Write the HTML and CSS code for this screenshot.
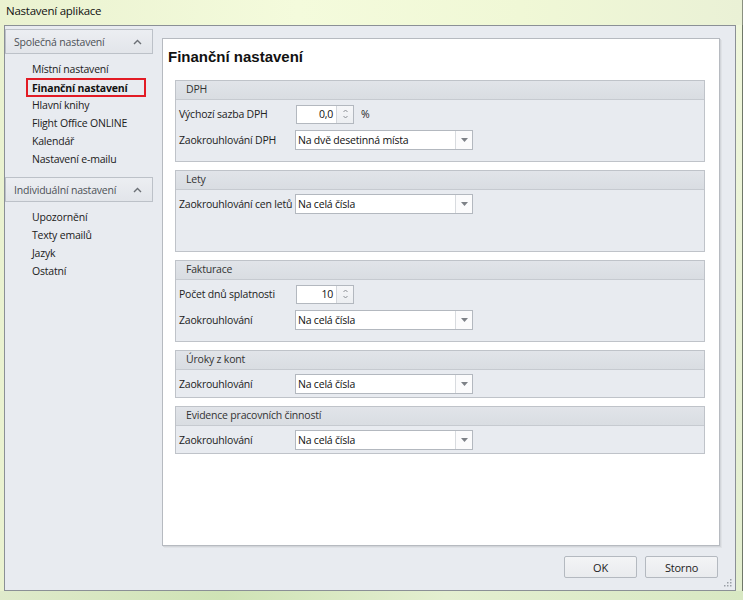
FILE: index.html
```html
<!DOCTYPE html>
<html lang="cs">
<head>
<meta charset="utf-8">
<title>Nastavení aplikace</title>
<link rel="stylesheet" href="styles.css">
</head>
<body>
<div class="window">
  <div class="titlebar"><span class="title">Nastavení aplikace</span></div>
  <div class="frame">
    <div class="glass-side left"></div>
    <div class="client">
      <div class="content">
        <nav class="nav">
          <div class="nav-group">
            <div class="nav-head"><span>Společná nastavení</span><span class="chev"><svg width="9" height="6" viewBox="0 0 9 6"><path d="M1 5 L4.5 1.5 L8 5" fill="none" stroke="#6b6f75" stroke-width="1.4"/></svg></span></div>
            <ul class="nav-items">
              <li>Místní nastavení</li>
              <li class="active"><span>Finanční nastavení</span></li>
              <li>Hlavní knihy</li>
              <li>Flight Office ONLINE</li>
              <li>Kalendář</li>
              <li>Nastavení e-mailu</li>
            </ul>
          </div>
          <div class="nav-group">
            <div class="nav-head"><span>Individuální nastavení</span><span class="chev"><svg width="9" height="6" viewBox="0 0 9 6"><path d="M1 5 L4.5 1.5 L8 5" fill="none" stroke="#6b6f75" stroke-width="1.4"/></svg></span></div>
            <ul class="nav-items">
              <li>Upozornění</li>
              <li>Texty emailů</li>
              <li>Jazyk</li>
              <li>Ostatní</li>
            </ul>
          </div>
        </nav>
        <main class="panel">
          <h1 class="panel-title">Finanční nastavení</h1>
          <section class="group tall">
            <div class="group-head">DPH</div>
            <div class="group-body">
              <div class="row">
                <span class="lbl">Výchozí sazba DPH</span>
                <div class="spin"><span class="spin-val">0,0</span><span class="spin-btn"><svg width="5" height="12" viewBox="0 0 5 12"><path d="M0.5 4 L2.5 2 L4.5 4 M0.5 8 L2.5 10 L4.5 8" fill="none" stroke="#8a8e94" stroke-width="1"/></svg></span></div>
                <span class="unit">%</span>
              </div>
              <div class="row">
                <span class="lbl">Zaokrouhlování DPH</span>
                <div class="combo"><span class="combo-val">Na dvě desetinná místa</span><span class="combo-btn"><svg width="7" height="4" viewBox="0 0 7 4"><path d="M0 0 H7 L3.5 4Z" fill="#7d8187"/></svg></span></div>
              </div>
            </div>
          </section>
          <section class="group tall">
            <div class="group-head">Lety</div>
            <div class="group-body">
              <div class="row">
                <span class="lbl">Zaokrouhlování cen letů</span>
                <div class="combo"><span class="combo-val">Na celá čísla</span><span class="combo-btn"><svg width="7" height="4" viewBox="0 0 7 4"><path d="M0 0 H7 L3.5 4Z" fill="#7d8187"/></svg></span></div>
              </div>
            </div>
          </section>
          <section class="group tall">
            <div class="group-head">Fakturace</div>
            <div class="group-body">
              <div class="row">
                <span class="lbl">Počet dnů splatnosti</span>
                <div class="spin"><span class="spin-val">10</span><span class="spin-btn"><svg width="5" height="12" viewBox="0 0 5 12"><path d="M0.5 4 L2.5 2 L4.5 4 M0.5 8 L2.5 10 L4.5 8" fill="none" stroke="#8a8e94" stroke-width="1"/></svg></span></div>
              </div>
              <div class="row">
                <span class="lbl">Zaokrouhlování</span>
                <div class="combo"><span class="combo-val">Na celá čísla</span><span class="combo-btn"><svg width="7" height="4" viewBox="0 0 7 4"><path d="M0 0 H7 L3.5 4Z" fill="#7d8187"/></svg></span></div>
              </div>
            </div>
          </section>
          <section class="group">
            <div class="group-head">Úroky z kont</div>
            <div class="group-body">
              <div class="row">
                <span class="lbl">Zaokrouhlování</span>
                <div class="combo"><span class="combo-val">Na celá čísla</span><span class="combo-btn"><svg width="7" height="4" viewBox="0 0 7 4"><path d="M0 0 H7 L3.5 4Z" fill="#7d8187"/></svg></span></div>
              </div>
            </div>
          </section>
          <section class="group">
            <div class="group-head">Evidence pracovních činností</div>
            <div class="group-body">
              <div class="row">
                <span class="lbl">Zaokrouhlování</span>
                <div class="combo"><span class="combo-val">Na celá čísla</span><span class="combo-btn"><svg width="7" height="4" viewBox="0 0 7 4"><path d="M0 0 H7 L3.5 4Z" fill="#7d8187"/></svg></span></div>
              </div>
            </div>
          </section>
        </main>
      </div>
      <footer class="footer">
        <button class="btn">OK</button>
        <button class="btn">Storno</button>
        <span class="grip"><svg width="8" height="8" viewBox="0 0 8 8"><g fill="#9aa0a6"><rect x="6" y="0" width="1.5" height="1.5"/><rect x="3" y="3" width="1.5" height="1.5"/><rect x="6" y="3" width="1.5" height="1.5"/><rect x="0" y="6" width="1.5" height="1.5"/><rect x="3" y="6" width="1.5" height="1.5"/><rect x="6" y="6" width="1.5" height="1.5"/></g></svg></span>
      </footer>
    </div>
    <div class="glass-side right"></div>
  </div>
  <div class="glass-bottom"></div>
</div>
</body>
</html>
```
FILE: styles.css
```css
* { box-sizing: border-box; }
html, body { margin: 0; padding: 0; }
body {
  width: 743px;
  height: 600px;
  overflow: hidden;
  font-family: "Open Sans", "Liberation Sans", sans-serif;
  font-size: 10.5px;
  letter-spacing: -0.2px;
  color: #1e1e1e;
  background: #eef5d8;
}
.window {
  width: 743px;
  height: 600px;
  display: flex;
  flex-direction: column;
  background: linear-gradient(90deg, #eaf2d0 0%, #f4fbdc 40%, #f0f8d6 70%, #eaf1d6 100%);
}
.titlebar {
  height: 25px;
  flex: none;
  display: flex;
  align-items: center;
  padding-left: 6px;
  border-right: 1px solid #8a9080;
}
.title {
  font-size: 11.5px;
  letter-spacing: -0.25px;
  color: #111;
  position: relative;
  top: -2px;
}
.frame {
  flex: 1;
  display: flex;
  min-height: 0;
}
.glass-side.left { width: 4px; flex: none; }
.glass-side.right {
  width: 7px;
  flex: none;
  border-right: 1px solid #6f7768;
  background: linear-gradient(180deg, #f0f7dc, #e3eed0);
}
.glass-bottom {
  height: 9px;
  flex: none;
  background: linear-gradient(90deg, #dfeacb, #cfe3b5 30%, #e4efd0 60%, #d8e8c3 100%);
}
.client {
  flex: 1;
  display: flex;
  flex-direction: column;
  background: #e8ebf0;
  border: 1px solid #8b9096;
  min-width: 0;
}
.content {
  flex: 1;
  display: flex;
  min-height: 0;
}
.nav {
  width: 148px;
  flex: none;
  padding-top: 3px;
  display: flex;
  flex-direction: column;
}
.nav-head {
  height: 25px;
  display: flex;
  align-items: center;
  justify-content: space-between;
  padding: 0 8px 0 8px;
  border: 1px solid #bcc1c8;
  background: linear-gradient(180deg, #eceef2 0%, #e2e5ea 100%);
  color: #4d5157;
}
.nav-head .chev { display: flex; align-items: center; padding-right: 2px; }
.nav-items {
  list-style: none;
  margin: 0;
  padding: 6px 0 0 21px;
  height: 123px;
}
.nav-group + .nav-group .nav-items { height: auto; }
.nav-items li {
  height: 18px;
  line-height: 18px;
  color: #202020;
}
.nav-items li:not(.active) { padding-left: 6px; }
.nav-items li.active span {
  display: inline-block;
  width: 120px;
  height: 19px;
  line-height: 16px;
  padding-left: 4px;
  border: 2px solid #e21b25;
  font-weight: 700;
  color: #111;
}
.panel {
  flex: 1;
  margin: 12px 15px 0 9px;
  background: #fff;
  border: 1px solid #b6bac0;
  box-shadow: 1px 1px 0 #d2d5da, 2px 2px 0 #dfe2e6;
  padding: 0 14px 0 12px;
  min-width: 0;
}
.panel-title {
  margin: 8px 0 0 -7px;
  height: 33px;
  font-family: "Liberation Sans", Arial, sans-serif;
  font-size: 15px;
  letter-spacing: 0;
  font-weight: 700;
  color: #111;
  line-height: 20px;
}
.group {
  border: 1px solid #bfc3c9;
  background: #e8ebf0;
  margin-bottom: 8px;
  padding-bottom: 3px;
}
.group.tall { height: 82px; }
.group-head {
  height: 19px;
  line-height: 17px;
  padding-left: 10px;
  border-bottom: 1px solid #c6cad0;
  background: linear-gradient(180deg, #e1e4e9 0%, #d9dde2 100%);
  color: #333;
}
.group-body {
  padding: 4px 0 0 3px;
  display: flex;
  flex-direction: column;
  gap: 6px;
}
.row {
  display: flex;
  align-items: center;
  height: 20px;
}
.lbl {
  width: 116px;
  flex: none;
  color: #222;
  white-space: nowrap;
}
.spin {
  margin-left: 1px;
  width: 58px;
  height: 19px;
  display: flex;
  background: #fff;
  border: 1px solid #b3b8bf;
}
.spin-val {
  flex: 1;
  text-align: right;
  padding-right: 3px;
  line-height: 17px;
  color: #111;
}
.spin-btn {
  width: 17px;
  flex: none;
  display: flex;
  align-items: center;
  justify-content: center;
  border-left: 1px solid #d3d6db;
  background: linear-gradient(180deg, #f6f7f9, #eceef1);
}
.unit {
  margin-left: 7px;
}
.combo {
  width: 178px;
  height: 20px;
  display: flex;
  background: #fff;
  border: 1px solid #b3b8bf;
}
.combo-val {
  flex: 1;
  padding-left: 2px;
  line-height: 18px;
  color: #111;
  white-space: nowrap;
}
.combo-btn {
  width: 17px;
  flex: none;
  display: flex;
  align-items: center;
  justify-content: center;
  border-left: 1px solid #d8dbdf;
  background: #fbfbfc;
}
.footer {
  height: 44px;
  flex: none;
  display: flex;
  align-items: flex-start;
  justify-content: flex-end;
  padding: 10px 17px 0 0;
  gap: 8px;
  position: relative;
}
.btn {
  width: 73px;
  height: 22px;
  border: 1px solid #b4b9c0;
  border-radius: 2px;
  background: linear-gradient(180deg, #f3f4f6 0%, #e9ebee 100%);
  font-family: inherit;
  font-size: 11px;
  letter-spacing: -0.2px;
  color: #222;
  padding: 0;
}
.grip {
  position: absolute;
  right: 3px;
  bottom: 3px;
  display: flex;
}
```
